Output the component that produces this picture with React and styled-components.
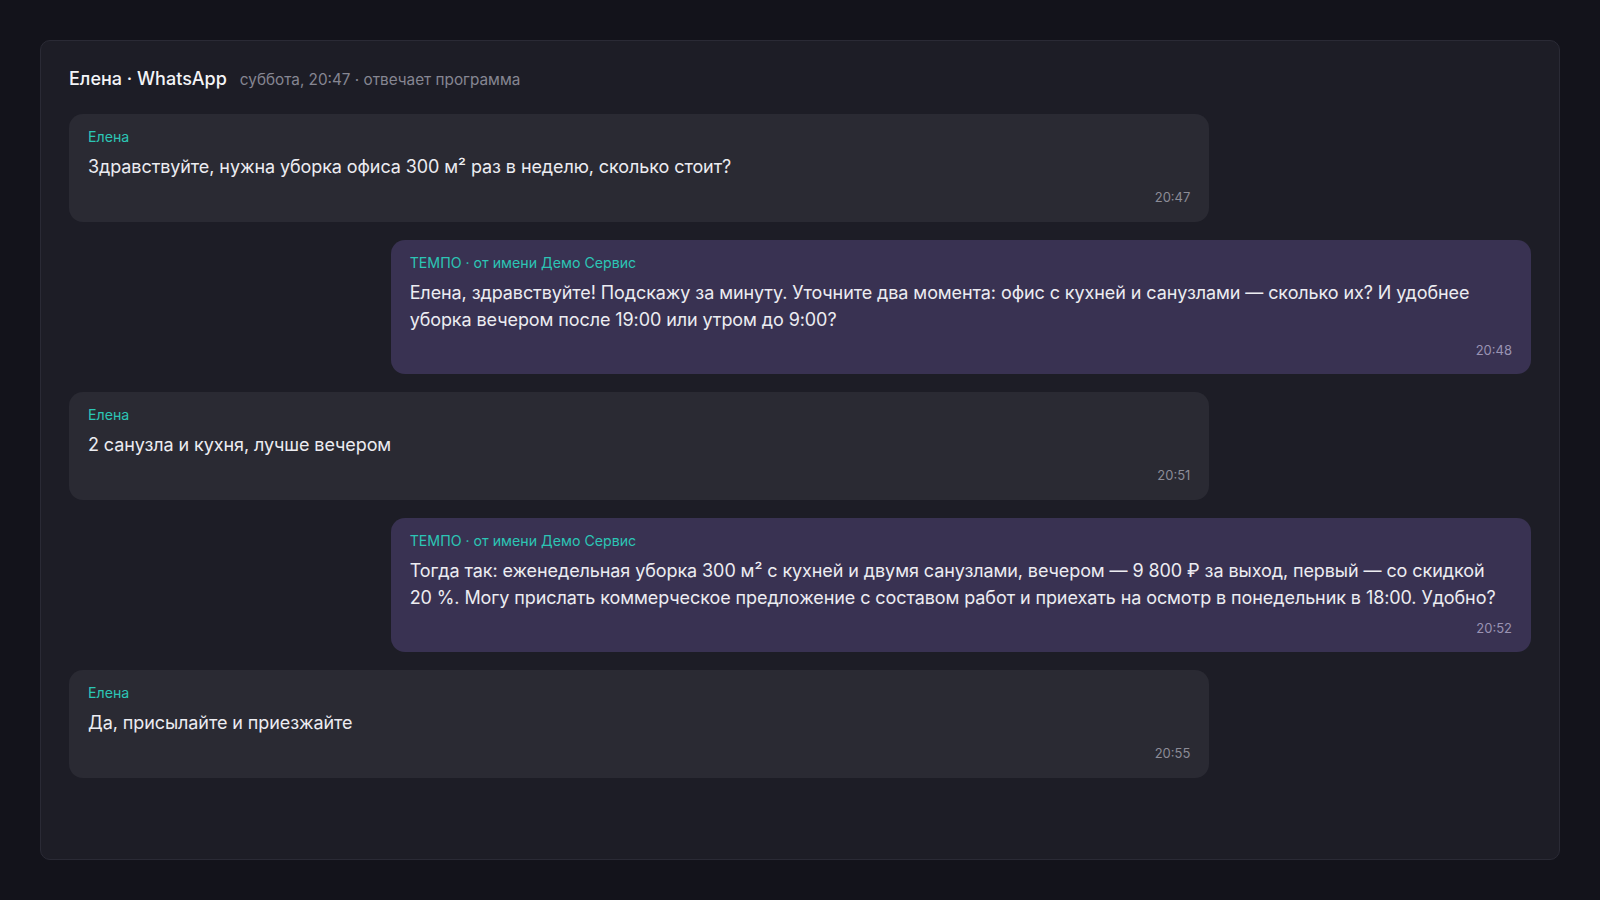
import styled, { createGlobalStyle } from 'styled-components';

const GlobalStyle = createGlobalStyle`
  * { box-sizing: border-box; }
  html, body { margin: 0; padding: 0; background: #13131b; }
  body {
    font-family: Inter, "Noto Sans", "Liberation Sans", sans-serif;
    color: #ececf1;
  }
`;

const Page = styled.div`
  height: 100vh;
  padding: 40px;
`;

const Panel = styled.section`
  height: 100%;
  background: #1d1d26;
  border: 1px solid #2a2a35;
  border-radius: 10px;
  padding: 27px 28px;
  display: flex;
  flex-direction: column;
`;

const Header = styled.header`
  display: flex;
  align-items: baseline;
  gap: 13px;
  margin-bottom: 23px;
  line-height: 22px;
`;

const Title = styled.h2`
  margin: 0;
  font-size: 18px;
  font-weight: 500;
  color: #f4f4f7;
`;

const Subtitle = styled.span`
  font-size: 15.3px;
  color: #868692;
`;

const Thread = styled.div`
  display: flex;
  flex-direction: column;
  gap: 18px;
`;

const Bubble = styled.div`
  align-self: ${(p) => (p.$bot ? 'flex-end' : 'flex-start')};
  width: 78%;
  background: ${(p) => (p.$bot ? '#393252' : '#2a2a33')};
  border-radius: 14px;
  padding: 14px 19px 15.5px;
  display: flex;
  flex-direction: column;
`;

const Author = styled.div`
  font-size: 14.2px;
  line-height: 18px;
  color: #2cc5b5;
  margin-bottom: 7px;
`;

const Text = styled.p`
  margin: 0;
  font-size: 18px;
  line-height: 27px;
  letter-spacing: -0.09px;
  color: #ececf1;
`;

const Time = styled.div`
  align-self: flex-end;
  font-size: 13px;
  line-height: 18px;
  margin-top: 8px;
  color: ${(p) => (p.$bot ? '#9a93b3' : '#8c8c97')};
`;

const messages = [
  {
    bot: false,
    author: 'Елена',
    text: 'Здравствуйте, нужна уборка офиса 300\u00a0м² раз в неделю, сколько стоит?',
    time: '20:47',
  },
  {
    bot: true,
    author: 'ТЕМПО · от имени Демо Сервис',
    text: 'Елена, здравствуйте! Подскажу за минуту. Уточните два момента: офис с кухней и санузлами — сколько их? И удобнее уборка вечером после 19:00 или утром до 9:00?',
    time: '20:48',
  },
  {
    bot: false,
    author: 'Елена',
    text: '2 санузла и кухня, лучше вечером',
    time: '20:51',
  },
  {
    bot: true,
    author: 'ТЕМПО · от имени Демо Сервис',
    text: 'Тогда так: еженедельная уборка 300\u00a0м² с кухней и двумя санузлами, вечером — 9\u00a0800\u00a0₽ за выход, первый — со скидкой 20\u00a0%. Могу прислать коммерческое предложение с составом работ и приехать на осмотр в понедельник в 18:00. Удобно?',
    time: '20:52',
  },
  {
    bot: false,
    author: 'Елена',
    text: 'Да, присылайте и приезжайте',
    time: '20:55',
  },
];

export default function App() {
  return (
    <>
      <GlobalStyle />
      <Page>
        <Panel>
          <Header>
            <Title>Елена · WhatsApp</Title>
            <Subtitle>суббота, 20:47 · отвечает программа</Subtitle>
          </Header>
          <Thread>
            {messages.map((m, i) => (
              <Bubble key={i} $bot={m.bot}>
                <Author>{m.author}</Author>
                <Text>{m.text}</Text>
                <Time $bot={m.bot}>{m.time}</Time>
              </Bubble>
            ))}
          </Thread>
        </Panel>
      </Page>
    </>
  );
}
